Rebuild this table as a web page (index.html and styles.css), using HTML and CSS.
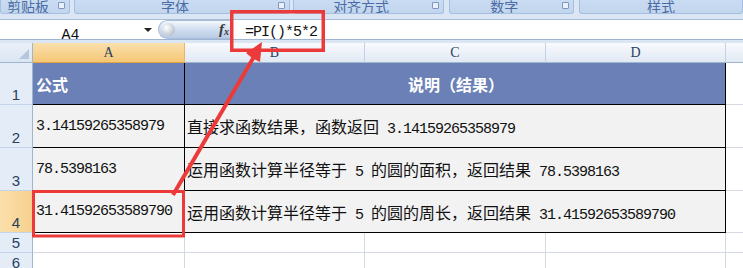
FILE: index.html
```html
<!DOCTYPE html>
<html lang="zh-CN">
<head>
    <meta charset="UTF-8">
    <title>PI 函数</title>
    <link rel="stylesheet" href="styles.css">
</head>
<body>
    <div class="ribbon">
        <div class="group g-clip"><span class="label">剪贴板</span><span class="launcher"></span></div>
        <div class="group g-font"><span class="label">字体</span><span class="launcher"></span></div>
        <div class="group g-align"><span class="label">对齐方式</span><span class="launcher"></span></div>
        <div class="group g-number"><span class="label">数字</span><span class="launcher"></span></div>
        <div class="group g-style no-launch"><span class="label">样式</span></div>
    </div>

    <div class="formula-row">
        <div class="name-box"><span class="cell-ref">A4</span><i class="drop"></i></div>
        <div class="splitter"><span class="knob"></span><span class="fx">f<sub>x</sub></span></div>
        <div class="formula-input"><span class="mono">=PI()*5*2</span></div>
    </div>

    <div class="sheet">
        <!-- 列标 -->
        <div class="corner"><span class="corner-tri"></span></div>
        <div class="col-head active">A</div>
        <div class="col-head">B</div>
        <div class="col-head">C</div>
        <div class="col-head">D</div>
        <div class="col-head last"></div>

        <!-- 第 1 行：表头 -->
        <div class="row-head">1</div>
        <div class="cell head"><span>公式</span></div>
        <div class="cell head merged center"><span>说明（结果）</span></div>
        <div class="cell empty"></div>

        <!-- 第 2 行 -->
        <div class="row-head">2</div>
        <div class="cell data"><span class="mono">3.14159265358979</span></div>
        <div class="cell data merged"><span>直接求函数结果，函数返回<span class="mono"> 3.14159265358979</span></span></div>
        <div class="cell empty"></div>

        <!-- 第 3 行 -->
        <div class="row-head">3</div>
        <div class="cell data"><span class="mono">78.5398163</span></div>
        <div class="cell data merged"><span>运用函数计算半径等于<span class="mono"> 5 </span>的圆的面积，返回结果<span class="mono"> 78.5398163</span></span></div>
        <div class="cell empty"></div>

        <!-- 第 4 行（当前单元格） -->
        <div class="row-head active">4</div>
        <div class="cell data"><span class="mono">31.41592653589790</span></div>
        <div class="cell data merged"><span>运用函数计算半径等于<span class="mono"> 5 </span>的圆的周长，返回结果<span class="mono"> 31.41592653589790</span></span></div>
        <div class="cell empty"></div>

        <!-- 空行 -->
        <div class="row-head">5</div>
        <div class="cell grid"></div>
        <div class="cell grid"></div>
        <div class="cell grid"></div>
        <div class="cell grid"></div>
        <div class="cell grid"></div>

        <div class="row-head">6</div>
        <div class="cell grid"></div>
        <div class="cell grid"></div>
        <div class="cell grid"></div>
        <div class="cell grid"></div>
        <div class="cell grid"></div>
    </div>

    <!-- 红色标注：公式框、A4 单元格和箭头 -->
    <svg class="marks" width="743" height="268" viewBox="0 0 743 268">
        <rect x="231.75" y="11.75" width="91.5" height="38.5" fill="none" stroke="#ec3a3a" stroke-width="3.5"/>
        <rect x="33.5" y="191.5" width="150" height="44.5" fill="none" stroke="#ec3a3a" stroke-width="3"/>
        <line x1="173" y1="195" x2="255" y2="55" stroke="#ec3a3a" stroke-width="4"/>
        <polygon points="262,42 260,62 252,58 246,53" fill="#ec3a3a"/>
    </svg>
</body>
</html>
```

FILE: styles.css
```css
body {
    margin: 0;
    width: 743px;
    height: 268px;
    overflow: hidden;
    position: relative;
    background-color: #dbe6f4;
    font-family: 'Noto Sans CJK SC', sans-serif;
}

/* 功能区分组标题 */
.ribbon {
    display: flex;
    height: 14px;
}
.group {
    position: relative;
    box-sizing: border-box;
    height: 14px;
    display: flex;
    justify-content: center;
    padding-right: 14px;
    overflow: hidden;
    background: linear-gradient(#cadcf2, #c1d5ee);
    border: 1px solid #a6bfe0;
    border-top: none;
    border-radius: 0 0 3px 3px;
}
.group.no-launch {
    padding-right: 0;
}
.g-clip { width: 75px; }
.g-font { width: 233px; margin-left: 4px; }
.g-align { width: 163px; margin-left: 3px; }
.g-number { width: 135px; margin-left: 5px; }
.g-style { width: 164px; margin-left: 5px; flex-shrink: 0; }
.label {
    font-size: 14px;
    line-height: 12px;
    color: #4a6ca3;
}
.launcher {
    position: absolute;
    right: 4px;
    top: 2px;
    width: 5px;
    height: 5px;
    border: 1px solid #7d97bf;
    border-radius: 1px;
    background: #e8f0fa;
}

/* 编辑栏 */
.formula-row {
    display: flex;
    height: 19px;
    margin-top: 5px;
    margin-bottom: 3px;
    background: #fff;
    border-top: 1px solid #a9bdd9;
    border-bottom: 1px solid #9fb4d2;
}
.name-box {
    width: 157px;
    position: relative;
    text-align: center;
}
.cell-ref {
    font-family: 'Liberation Mono', monospace;
    font-size: 15px;
    line-height: 16px;
    margin-left: -16px;
    color: #111;
}
.drop {
    position: absolute;
    right: 5px;
    top: 8px;
    border-left: 4px solid transparent;
    border-right: 4px solid transparent;
    border-top: 4px solid #222;
}
.splitter {
    position: relative;
    width: 73px;
    margin-left: 1px;
    border-radius: 10px 0 0 10px;
    background: linear-gradient(#f4f8fd, #cddcef 55%, #b9cbe4);
    border: 1px solid #a9bdd9;
    border-right: none;
    box-sizing: border-box;
}
.knob {
    position: absolute;
    left: 3px;
    top: 2px;
    width: 13px;
    height: 13px;
    border-radius: 50%;
    background: radial-gradient(circle at 35% 35%, #ffffff, #c9cfd8 60%, #9aa4b2);
}
.fx {
    position: absolute;
    right: 2px;
    top: 0;
    font-family: 'Liberation Serif', serif;
    font-style: italic;
    font-weight: bold;
    font-size: 15px;
    line-height: 17px;
    color: #3a3a3a;
}
.fx sub {
    font-size: 10px;
    vertical-align: -1px;
}
.formula-input {
    flex: 1;
    border-left: 1px solid #a9bdd9;
    padding-left: 13px;
    line-height: 18px;
}

/* 等宽数字 */
.mono {
    font-family: 'Liberation Mono', monospace;
    font-size: 15px;
    letter-spacing: -1px;
    white-space: pre;
    color: #111;
}

/* 工作表 */
.sheet {
    display: grid;
    grid-template-columns: 33px 152px 180px 181px 180px 40px;
    grid-template-rows: 20px 42px 43px 43px 42px 20px 20px;
    background: #fff;
}
.corner {
    position: relative;
    background: linear-gradient(#e9f0f9, #dbe5f2);
    border-right: 1px solid #9eb6ce;
    border-bottom: 1px solid #9eb6ce;
}
.corner-tri {
    position: absolute;
    right: 3px;
    bottom: 3px;
    border-left: 10px solid transparent;
    border-bottom: 10px solid #b6c6dc;
}
.col-head {
    box-sizing: border-box;
    background: linear-gradient(#f8fafd, #e1e9f4);
    border-right: 1px solid #c3d1e4;
    border-bottom: 1px solid #9eb6ce;
    font-family: 'Liberation Serif', serif;
    font-size: 14px;
    line-height: 19px;
    text-align: center;
    color: #27415f;
}
.col-head.active {
    background: linear-gradient(#fae0ad, #f5c775);
    border-bottom-color: #e6a545;
    border-right-color: #e6b66a;
}
.col-head.last {
    border-right: none;
}
.row-head {
    box-sizing: border-box;
    display: flex;
    align-items: flex-end;
    justify-content: center;
    padding-bottom: 1px;
    background: #e4ecf7;
    border-right: 1px solid #9eb6ce;
    border-bottom: 1px solid #c5d3e6;
    font-family: 'Liberation Sans', sans-serif;
    font-size: 15px;
    line-height: 17px;
    color: #27415f;
}
.row-head.active {
    background: linear-gradient(90deg, #fbe0ac, #f7d08e);
    border-right-color: #e6a545;
}
.cell {
    box-sizing: border-box;
    display: flex;
    align-items: center;
    padding-left: 3px;
    white-space: nowrap;
    overflow: hidden;
    font-size: 16px;
    color: #111;
}
.cell.merged {
    grid-column: span 3;
    padding-left: 2px;
}
.cell.center {
    justify-content: center;
}
.cell.head {
    background: #6b80b6;
    color: #fff;
    font-weight: bold;
    border-right: 1px solid #000;
    border-bottom: 1px solid #000;
}
.cell.data {
    background: #f2f2f2;
    border-right: 1px solid #000;
    border-bottom: 1px solid #000;
}
.cell.empty {
    border-bottom: 1px solid #d4d9e2;
}
.cell.grid {
    border-right: 1px solid #d4d9e2;
    border-bottom: 1px solid #d4d9e2;
}

/* 标注层 */
.marks {
    position: absolute;
    left: 0;
    top: 0;
    pointer-events: none;
}
```
